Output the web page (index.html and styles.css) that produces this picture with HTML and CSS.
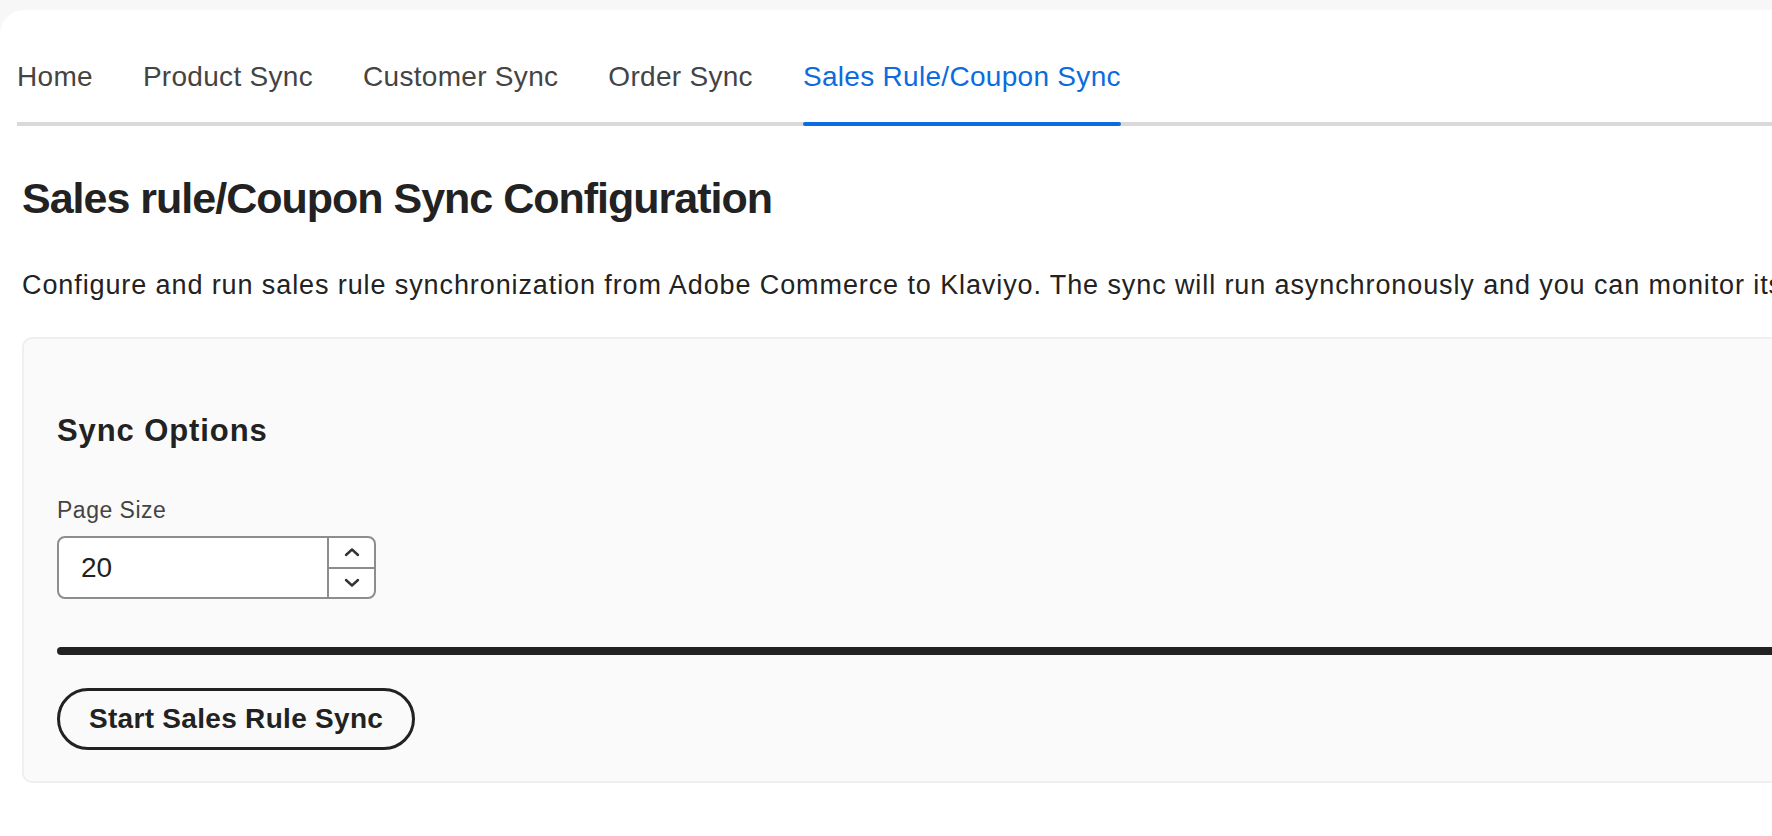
FILE: index.html
```html
<!DOCTYPE html>
<html lang="en">
<head>
<meta charset="utf-8">
<title>Sales Rule/Coupon Sync</title>
<link rel="stylesheet" href="styles.css">
</head>
<body>
<div class="panel">
  <nav class="tabs">
    <a class="tab">Home</a>
    <a class="tab">Product Sync</a>
    <a class="tab">Customer Sync</a>
    <a class="tab">Order Sync</a>
    <a class="tab active">Sales Rule/Coupon Sync</a>
  </nav>
  <main class="content">
    <h1 class="title">Sales rule/Coupon Sync Configuration</h1>
    <p class="intro">Configure and run sales rule synchronization from Adobe Commerce to Klaviyo. The sync will run asynchronously and you can monitor its progress on the Home tab.</p>
    <section class="card">
      <h3 class="card-title">Sync Options</h3>
      <label class="field-label">Page Size</label>
      <div class="number-input">
        <span class="number-value">20</span>
        <div class="spinner">
          <span class="spin spin-up"><svg width="18" height="10" viewBox="0 0 18 10"><path d="M3 8 L9 2.5 L15 8" fill="none" stroke="#333" stroke-width="2.4" stroke-linecap="round" stroke-linejoin="round"/></svg></span>
          <span class="spin spin-down"><svg width="18" height="10" viewBox="0 0 18 10"><path d="M3 2 L9 7.5 L15 2" fill="none" stroke="#333" stroke-width="2.4" stroke-linecap="round" stroke-linejoin="round"/></svg></span>
        </div>
      </div>
      <hr class="divider">
      <button class="btn" type="button">Start Sales Rule Sync</button>
    </section>
  </main>
</div>
</body>
</html>
```
FILE: styles.css
```css
html, body {
  margin: 0;
  padding: 0;
}
body {
  background: #f7f7f7;
  overflow: hidden;
  font-family: "Liberation Sans", Arial, sans-serif;
  color: #222;
}
.panel {
  margin-top: 10px;
  width: 2400px;
  min-height: 826px;
  background: #fff;
  border-top-left-radius: 24px;
  padding-top: 51px;
  box-sizing: border-box;
}
.tabs {
  display: flex;
  gap: 50px;
  margin-left: 17px;
  border-bottom: 4px solid #d9d9d9;
}
.tab {
  position: relative;
  font-size: 28px;
  line-height: 32px;
  letter-spacing: 0.3px;
  color: #444;
  padding-bottom: 29px;
  white-space: nowrap;
}
.tab.active {
  color: #0b6bdf;
}
.tab.active::after {
  content: "";
  position: absolute;
  left: 0;
  right: 0;
  bottom: -4px;
  height: 4px;
  border-radius: 2px;
  background: #0b6bdf;
}
.content {
  margin-left: 22px;
}
.title {
  margin: 47px 0 0;
  font-size: 43px;
  line-height: 50px;
  font-weight: 700;
  letter-spacing: -1px;
  color: #222;
}
.intro {
  margin: 47px 0 0;
  font-size: 27px;
  line-height: 31px;
  letter-spacing: 0.9px;
  color: #222;
  white-space: nowrap;
}
.card {
  margin-top: 36px;
  border: 2px solid #efefef;
  border-radius: 10px;
  background: #fafafa;
  padding: 0 0 31px 33px;
}
.card-title {
  margin: 74px 0 0;
  font-size: 31px;
  line-height: 36px;
  font-weight: 700;
  letter-spacing: 0.9px;
  color: #222;
}
.field-label {
  display: block;
  margin-top: 47px;
  font-size: 23px;
  line-height: 28px;
  letter-spacing: 0.5px;
  color: #444;
}
.number-input {
  margin-top: 12px;
  width: 319px;
  height: 63px;
  box-sizing: border-box;
  border: 2px solid #8d8d8d;
  border-radius: 8px;
  background: #fff;
  display: flex;
  overflow: hidden;
}
.number-value {
  flex: 1;
  display: flex;
  align-items: center;
  padding-left: 22px;
  font-size: 28px;
  color: #222;
}
.spinner {
  width: 47px;
  box-sizing: border-box;
  border-left: 2px solid #8d8d8d;
  display: flex;
  flex-direction: column;
}
.spin {
  flex: 1;
  display: flex;
  align-items: center;
  justify-content: center;
}
.spin-up {
  border-bottom: 2px solid #8d8d8d;
}
.divider {
  margin: 48px 0 0;
  border: 0;
  height: 8px;
  border-radius: 4px;
  background: #222;
}
.btn {
  display: block;
  margin-top: 33px;
  height: 62px;
  box-sizing: border-box;
  padding: 0 29px;
  border: 3px solid #222;
  border-radius: 31px;
  background: transparent;
  font-family: "Liberation Sans", Arial, sans-serif;
  font-size: 28px;
  font-weight: 700;
  letter-spacing: 0.3px;
  color: #222;
}
```
